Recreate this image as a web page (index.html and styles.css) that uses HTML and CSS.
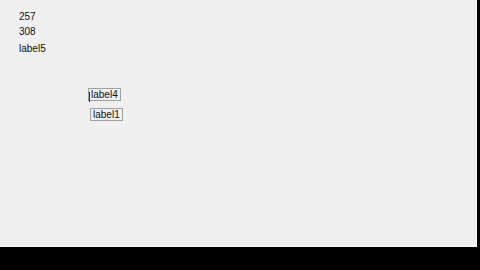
FILE: index.html
```html
<!DOCTYPE html>
<html>
<head><link rel="stylesheet" href="styles.css"></head>
<body>
<div class="window">
  <div class="labels">
    <div class="lbl l1">257</div>
    <div class="lbl l2">308</div>
    <div class="lbl l3">label5</div>
  </div>
  <div class="box b4"><span class="caret"></span>label4</div>
  <div class="box b1">label1</div>
</div>
</body>
</html>
```
FILE: styles.css
```css
html, body { margin: 0; padding: 0; background: #000; width: 480px; height: 270px; overflow: hidden; }
.window {
  position: relative;
  width: 476px; height: 246px;
  background: #f0f0f0;
  border-right: 1px solid #fbfbfb;
  border-bottom: 1px solid #fbfbfb;
  font-family: "Liberation Sans", Arial, sans-serif;
  font-size: 10px;
  color: #111;
}
.labels { padding: 10px 0 0 19px; display: flex; flex-direction: column; }
.lbl { line-height: 13px; height: 13px; }
.l2 { margin-top: 2px; }
.l3 { margin-top: 4px; }
.box {
  position: absolute;
  border: 1px solid #a0a0a0;
  background: #f0f0f0;
  line-height: 11px;
  padding: 0 2px 0 2px;
}
.b4 { left: 88px; top: 88px; }
.b1 { left: 90px; top: 108px; }
.caret { position: absolute; left: 0; top: 3px; width: 1px; height: 10px; background: #333; }
```
